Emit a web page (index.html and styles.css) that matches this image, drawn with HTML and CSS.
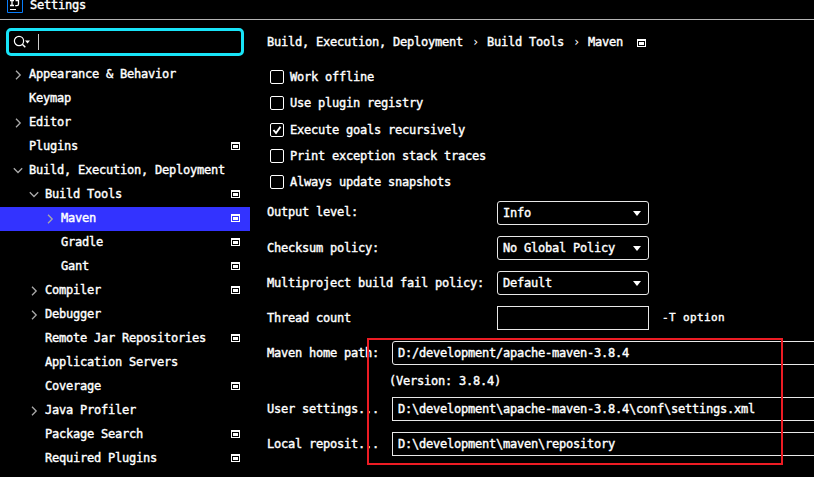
FILE: index.html
```html
<!DOCTYPE html>
<html lang="en">
<head>
<meta charset="utf-8">
<title>Settings</title>
<link rel="stylesheet" href="styles.css">
</head>
<body>
<svg width="0" height="0" class="defs">
  <symbol id="project" viewBox="0 0 9 8"><path fill="#fff" fill-rule="evenodd" d="M0 0H9V8H0ZM1 2V7H8V2ZM2 3H7V6H2Z"/></symbol>
  <symbol id="right" viewBox="0 0 10 10"><path d="M3 .8L7.200 5L3 9.2" fill="none" stroke="#aaa" stroke-width="1.3"/></symbol>
  <symbol id="down" viewBox="0 0 10 10"><path d="M.8 2.3L5 6.500L9.2 2.3" fill="none" stroke="#aaa" stroke-width="1.3"/></symbol>
</svg>
<header class="titlebar">
  <svg class="logo" width="16" height="16" viewBox="0 0 16 16"><path d="M.5 .5H15.500V15.500H.5Z" fill="#000" stroke="#087cfa"/><path d="M3 3.500H7M5 3.500V8.500M3 8.500H7M8.500 3.500H11.500V7.200Q11.500 8.600 10 8.600H8.200" fill="none" stroke="#fff" stroke-width="1.300"/><path d="M3 12.500H9" stroke="#fff"/></svg>
  <span>Settings</span>
</header>
<main class="window">
  <aside class="sidebar">
    <div class="search">
      <svg width="18" height="14" viewBox="0 0 18 14"><circle cx="6" cy="6" r="4.600" fill="none" stroke="#fff" stroke-width="1.200"/><path d="M9.300 9.300L12.300 12.300" stroke="#fff" stroke-width="1.500"/><path d="M12 5.500H17L14.500 8.500Z" fill="#fff"/></svg>
      <i class="caret"></i>
    </div>
    <nav class="tree">
      <div class="node"><svg class="arrow"><use href="#right"/></svg><span>Appearance &amp; Behavior</span></div>
      <div class="node leaf"><span>Keymap</span></div>
      <div class="node"><svg class="arrow"><use href="#right"/></svg><span>Editor</span></div>
      <div class="node leaf"><span>Plugins</span><svg class="proj"><use href="#project"/></svg></div>
      <div class="node"><svg class="arrow"><use href="#down"/></svg><span>Build, Execution, Deployment</span></div>
      <div class="node l1"><svg class="arrow"><use href="#down"/></svg><span>Build Tools</span><svg class="proj"><use href="#project"/></svg></div>
      <div class="node l2 selected"><svg class="arrow"><use href="#right"/></svg><span>Maven</span><svg class="proj"><use href="#project"/></svg></div>
      <div class="node l2 leaf"><span>Gradle</span><svg class="proj"><use href="#project"/></svg></div>
      <div class="node l2 leaf"><span>Gant</span><svg class="proj"><use href="#project"/></svg></div>
      <div class="node l1"><svg class="arrow"><use href="#right"/></svg><span>Compiler</span><svg class="proj"><use href="#project"/></svg></div>
      <div class="node l1"><svg class="arrow"><use href="#right"/></svg><span>Debugger</span></div>
      <div class="node l1 leaf"><span>Remote Jar Repositories</span><svg class="proj"><use href="#project"/></svg></div>
      <div class="node l1 leaf"><span>Application Servers</span></div>
      <div class="node l1 leaf"><span>Coverage</span><svg class="proj"><use href="#project"/></svg></div>
      <div class="node l1"><svg class="arrow"><use href="#right"/></svg><span>Java Profiler</span></div>
      <div class="node l1 leaf"><span>Package Search</span><svg class="proj"><use href="#project"/></svg></div>
      <div class="node l1 leaf"><span>Required Plugins</span><svg class="proj"><use href="#project"/></svg></div>
    </nav>
  </aside>
  <section class="content">
    <div class="crumbs"><span>Build, Execution, Deployment</span><span class="sep">›</span><span>Build Tools</span><span class="sep">›</span><span>Maven</span><svg class="proj"><use href="#project"/></svg></div>
    <div class="checks">
      <div class="check"><i class="box"></i><span>Work offline</span></div>
      <div class="check"><i class="box"></i><span>Use plugin registry</span></div>
      <div class="check"><i class="box"><svg width="12" height="12" viewBox="0 0 12 12"><path d="M2.500 6L5 9L9.500 2.700" fill="none" stroke="#fff" stroke-width="1.900"/></svg></i><span>Execute goals recursively</span></div>
      <div class="check"><i class="box"></i><span>Print exception stack traces</span></div>
      <div class="check"><i class="box"></i><span>Always update snapshots</span></div>
    </div>
    <div class="options">
      <div class="row"><label class="raised">Output level:</label><div class="field combo"><span>Info</span><i class="tri"></i></div></div>
      <div class="row"><label>Checksum policy:</label><div class="field combo"><span>No Global Policy</span><i class="tri"></i></div></div>
      <div class="row"><label>Multiproject build fail policy:</label><div class="field combo"><span>Default</span><i class="tri"></i></div></div>
      <div class="row"><label>Thread count</label><div class="field"></div><span class="hint">-T option</span></div>
    </div>
    <div class="paths">
      <div class="row"><label>Maven home path:</label><div class="field combo">D:/development/apache-maven-3.8.4</div></div>
      <div class="version">(Version: 3.8.4)</div>
      <div class="row"><label>User settings...</label><div class="field">D:\development\apache-maven-3.8.4\conf\settings.xml</div></div>
      <div class="row"><label>Local reposit...</label><div class="field">D:\development\maven\repository</div></div>
    </div>
  </section>
</main>
<div class="highlight"></div>
</body>
</html>
```
FILE: styles.css
```css
* { box-sizing: border-box; }
body {
  margin: 0;
  width: 814px;
  height: 477px;
  overflow: hidden;
  position: relative;
  background: #000;
  color: #fff;
  font: 12px/16px "DejaVu Sans Mono", monospace;
  letter-spacing: -0.2246px;
  -webkit-text-stroke: 0.4px #fff;
}
svg { display: block; flex: none; }
.defs { position: absolute; }
.titlebar {
  height: 20px;
  border-bottom: 1px solid #b4b4b4;
  display: flex;
  padding-left: 7px;
  gap: 7px;
}
.logo { margin-top: -3px; }
.titlebar span { line-height: 10px; }
.window { display: flex; height: 457px; }
.sidebar { width: 250px; flex: none; padding-top: 8px; }
.search {
  width: 238px;
  height: 28px;
  margin: 0 0 7px 6px;
  border: 3px solid #18e4f8;
  border-radius: 5px;
  display: flex;
  align-items: center;
  padding-left: 4px;
}
.caret { width: 1px; height: 16px; margin-left: 7px; background: #ccc; }
.node { height: 24px; display: flex; align-items: center; padding: 0 10px 2px 13px; }
.node.l1 { padding-left: 29px; }
.node.l2 { padding-left: 45px; }
.leaf span { margin-left: 16px; }
.selected { background: #3333ff; }
.arrow { width: 10px; height: 10px; margin: 2px 6px 0 0; }
.proj { width: 9px; height: 8px; }
.node .proj { margin-left: auto; }
.content { flex: 1; min-width: 0; padding: 14px 0 0 17px; }
.crumbs { height: 16px; display: flex; align-items: center; }
.sep { width: 24px; padding-left: 9px; -webkit-text-stroke: 0; }
.crumbs .proj { margin: 2px 0 0 14px; }
.checks { display: grid; gap: 10.25px; padding: 19px 0 0 3px; height: 139px; }
.check { height: 16px; display: flex; align-items: center; gap: 6px; }
.box { width: 14px; height: 14px; border: 1px solid #fff; border-radius: 2px; }
.options { display: grid; gap: 11px; margin-top: 12px; }
.row { display: flex; align-items: center; height: 24px; }
.row label { width: 230px; flex: none; }
.row .raised { padding-bottom: 2px; }
.field {
  width: 152px;
  height: 24px;
  flex: none;
  border: 1px solid #e8e8e8;
  padding: 0 7px 0 5px;
  display: flex;
  align-items: center;
  justify-content: space-between;
}
.combo { border-radius: 3px; }
.tri { border: solid transparent; border-width: 5px 4.5px 0; border-top-color: #fff; }
.hint { font-size: 11px; letter-spacing: 0.378px; margin-left: 13px; }
.paths { margin-top: 11px; }
.paths .row label { width: 125px; }
.paths .field { width: 440px; }
.version { height: 32px; padding: 8px 0 0 122px; }
.paths .row + .row { margin-top: 11px; }
.highlight {
  position: absolute;
  left: 367px;
  top: 338px;
  width: 416px;
  height: 127px;
  border: 2px solid #ed1c24;
}
```
